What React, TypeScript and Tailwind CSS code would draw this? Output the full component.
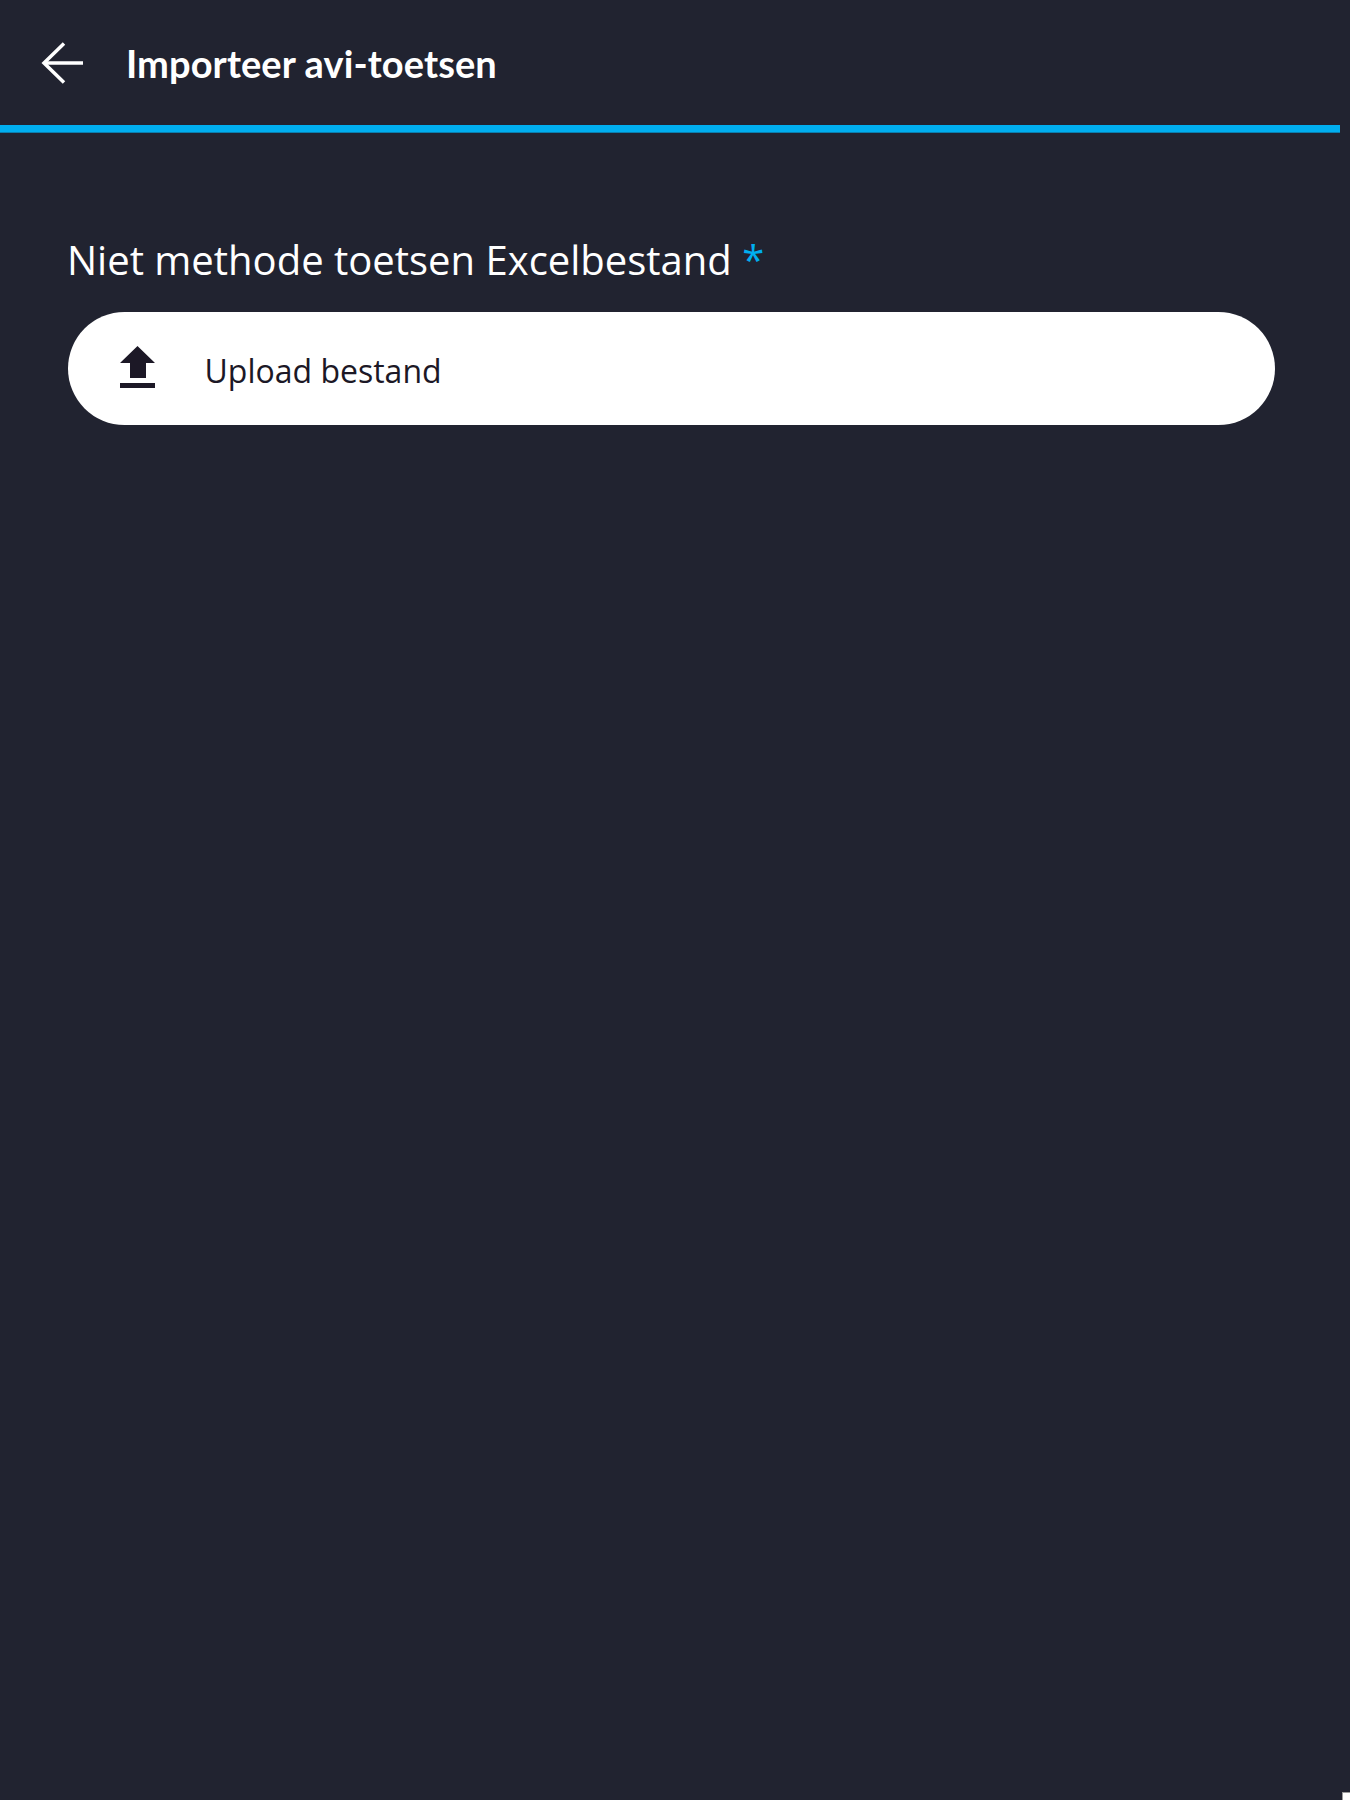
export default function App() {
  return (
    <main className="relative h-[1800px] bg-[#212330] overflow-hidden">
      <header className="mr-[10px] h-[132px] flex items-center border-b-[7px] border-[#00aeef] shadow-[0_1px_0_#0b7fae]">
        <svg width="44" height="44" viewBox="0 0 44 44" className="ml-[41px] text-white" fill="none" stroke="currentColor" strokeWidth="3.5">
          <path d="M3 22H42" />
          <path d="M23 2.5L3 22L23 41.5" />
        </svg>
        <h1 className="ml-[41px] pt-[2px] text-white font-bold text-[38px] tracking-[0.1px] font-['Lato',sans-serif]">Importeer avi-toetsen</h1>
      </header>
      <section className="pt-[101px] pl-[67px] pr-[75px]">
        <label className="block text-white text-[40px] leading-[54px] font-['Open_Sans',sans-serif]">
          Niet methode toetsen Excelbestand <span className="text-[#00aeef]">*</span>
        </label>
        <div className="mt-[25px] ml-[0.5px] h-[113px] bg-white rounded-[57px] flex items-center pl-[52px]">
          <svg width="35" height="42" viewBox="0 0 35 42" className="mb-[3px] text-[#1c1826]" fill="currentColor">
            <path d="M17.5 0L35 17H26V32H10V17H0Z" />
            <rect x="0" y="37" width="35" height="5" />
          </svg>
          <span className="ml-[50px] pt-[4px] text-[32px] text-[#1c1826] font-['Open_Sans',sans-serif]">Upload bestand</span>
        </div>
      </section>
      <div className="absolute right-0 bottom-0 w-[8px] h-[8px] bg-white border-l border-t border-[#9a9a9a]" />
    </main>
  );
}
